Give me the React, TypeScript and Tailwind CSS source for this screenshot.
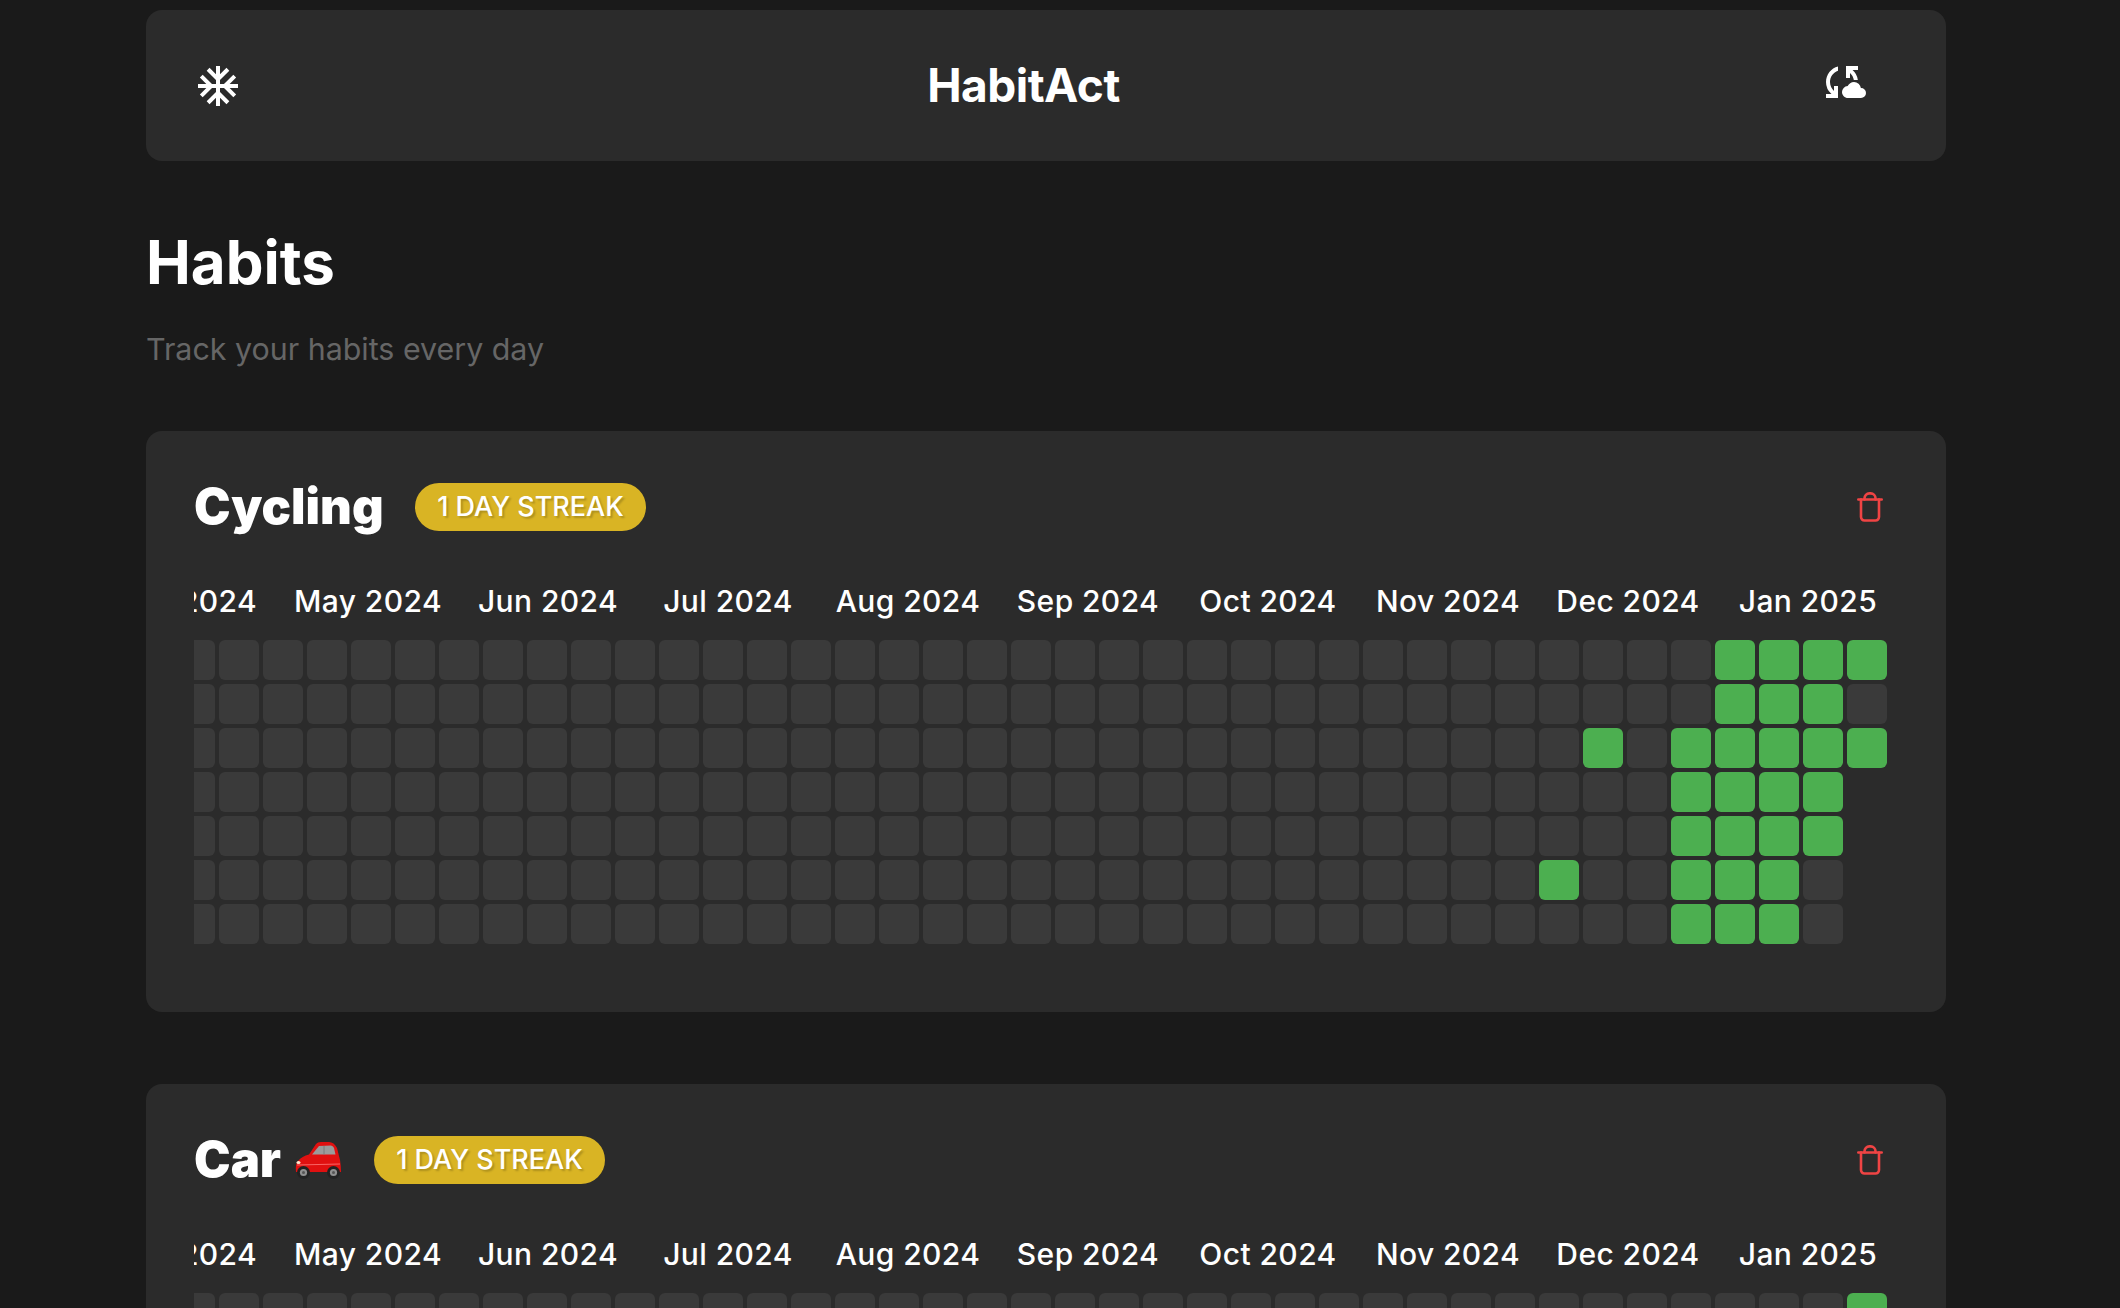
import React from "react";
import { MdAcUnit, MdCloudSync } from "react-icons/md";

const FONT = "font-['Inter','Liberation_Sans',sans-serif]";
const MONTHS = ["Apr 2024", "May 2024", "Jun 2024", "Jul 2024", "Aug 2024", "Sep 2024", "Oct 2024", "Nov 2024", "Dec 2024", "Jan 2025"];
const COLS = 39;

function Trash() {
  return (
    <svg width="26" height="30" viewBox="0 0 26 30" fill="none" stroke="#ef4444" strokeWidth="2.6" strokeLinecap="round" strokeLinejoin="round">
      <path d="M1.3 7.5h23.4" />
      <path d="M4 7.5V25a3.5 3.5 0 0 0 3.5 3.5h11A3.5 3.5 0 0 0 22 25V7.5" />
      <path d="M7.5 7.5V6.2a4.8 4.8 0 0 1 4.8-4.8h1.4a4.8 4.8 0 0 1 4.8 4.8v1.3" />
    </svg>
  );
}

function CarIcon() {
  return (
    <svg width="48" height="40" viewBox="0 0 48 40" aria-label="🚗" role="img">
      <path d="M2 32Q1 24 4 21Q8 16 15 14.5L22 4Q23.5 2 27 2L35 2Q40 2 43 8L46 20Q47 26 47 32Z" fill="#e01010" />
      <path d="M18 14.5L25 6L37 5.5Q39.5 6 40 8L41.5 14.5Z" fill="#9b9b9b" />
      <path d="M30 6V14.5" stroke="#7a7a7a" strokeWidth="1" />
      <path d="M3 25L46 24" stroke="#ff7a7a" strokeWidth="0.8" />
      <ellipse cx="4.5" cy="22.5" rx="2" ry="1.6" fill="#ffe9d0" />
      <circle cx="9.5" cy="32.5" r="6.5" fill="#222222" />
      <circle cx="9.5" cy="32.5" r="3.6" fill="#8f8f8f" />
      <circle cx="9.5" cy="32.5" r="1.5" fill="#555555" />
      <circle cx="39.5" cy="32.5" r="6.5" fill="#222222" />
      <circle cx="39.5" cy="32.5" r="3.6" fill="#8f8f8f" />
      <circle cx="39.5" cy="32.5" r="1.5" fill="#555555" />
    </svg>
  );
}

function isGreen(col: number, row: number, first: boolean) {
  if (!first) return col === COLS - 1 && row === 0;
  const k = COLS - 1 - col;
  const map: Record<number, number[]> = {
    0: [0, 2],
    1: [0, 1, 2, 3, 4],
    2: [0, 1, 2, 3, 4, 5, 6],
    3: [0, 1, 2, 3, 4, 5, 6],
    4: [2, 3, 4, 5, 6],
    6: [2],
    7: [5],
  };
  return (map[k] ?? []).includes(row);
}

function HabitCard({ first }: { first: boolean }) {
  const cells: React.ReactNode[] = [];
  const firstCount = 7 * (COLS - 1) + 3;
  for (let i = 0; i < firstCount; i++) {
    const col = Math.floor(i / 7);
    const row = i % 7;
    cells.push(
      <div key={i} className={`h-10 w-10 rounded-md ${isGreen(col, row, first) ? "bg-[#4caf50]" : "bg-[#3a3a3a]"}`} />
    );
  }
  return (
    <section className="mb-[72px] rounded-2xl bg-[#2b2b2b] px-12 pb-[68px] pt-12">
      <div className="flex h-14 items-center justify-between">
        <div className="flex items-center">
          <h2 className={`text-[49px] font-black leading-[56px] text-white ${first ? "w-[189px]" : "w-[90px]"}`}>{first ? "Cycling" : "Car"}</h2>
          {first ? null : <span className="ml-[10px] flex"><CarIcon /></span>}
          <span className="ml-8 flex h-12 w-[231px] items-center justify-center rounded-full bg-[#d9b424] text-[27px] font-medium text-white [text-shadow:2px_2px_2px_rgba(0,0,0,0.2)]">
            1 DAY STREAK
          </span>
        </div>
        <button className="mr-[15px] flex"><Trash /></button>
      </div>
      <div className="mt-[46px] flex h-10 justify-end overflow-hidden">
        {MONTHS.map((m) => (
          <div key={m} className="w-[180px] shrink-0 text-center text-[30px] font-medium leading-10 tracking-[0.4px] text-white whitespace-nowrap">{m}</div>
        ))}
      </div>
      <div className="mt-[19px] flex justify-end overflow-hidden pr-[11px]">
        <div className="grid shrink-0 grid-flow-col grid-rows-[repeat(7,40px)] auto-cols-[40px] gap-1">{cells}</div>
      </div>
    </section>
  );
}

export default function App() {
  return (
    <div className={`h-[1308px] overflow-hidden bg-[#1a1a1a] pl-[146px] pt-[10px] ${FONT}`}>
      <div className="w-[1800px]">
        <header className="flex h-[151px] items-center justify-between rounded-2xl bg-[#2b2b2b] pl-12 pr-20">
          <MdAcUnit size={48} color="#fff" />
          <h1 className="text-[46px] font-bold tracking-[-0.5px] text-white">HabitAct</h1>
          <div className="mb-[7px] pl-[13px]"><MdCloudSync size={48} color="#fff" /></div>
        </header>
        <h1 className="mt-[65px] text-[60px] font-bold leading-[72px] text-white">Habits</h1>
        <p className="mb-[62px] mt-[31px] text-[30.4px] leading-10 text-[#666666]">Track your habits every day</p>
        <HabitCard first />
        <HabitCard first={false} />
      </div>
    </div>
  );
}
